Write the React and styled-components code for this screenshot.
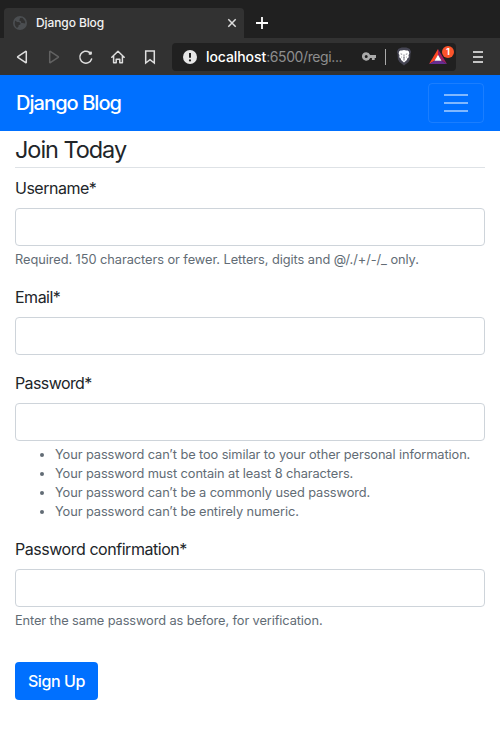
import React from "react";
import styled, { createGlobalStyle } from "styled-components";

const GlobalStyle = createGlobalStyle`
  *, *::before, *::after { box-sizing: border-box; }
  body {
    margin: 0;
    background: #fff;
    color: #212529;
    font-family: Inter, "Liberation Sans", sans-serif;
    font-size: 16px;
    line-height: 24px;
  }
`;

const Page = styled.div`
  min-height: 753px;
  background: #fff;
`;

const TabStrip = styled.div`
  display: flex;
  align-items: flex-end;
  height: 38px;
  padding-left: 4px;
  background: #202020;
`;

const Tab = styled.div`
  display: flex;
  align-items: center;
  width: 240px;
  height: 30px;
  padding: 0 7px 0 9px;
  border-radius: 4px 4px 0 0;
  background: #323232;
`;

const TabTitle = styled.span`
  flex: 1;
  margin-left: 9px;
  color: #f2f2f2;
  font-size: 12px;
  font-weight: 500;
  line-height: 16px;
  letter-spacing: -0.1px;
`;

const NewTab = styled.div`
  display: flex;
  align-items: center;
  height: 30px;
  padding-left: 12px;
`;

const Toolbar = styled.div`
  display: flex;
  align-items: center;
  height: 37px;
  padding: 0 14px 0 14px;
  background: #323232;
`;

const ToolIcons = styled.div`
  display: flex;
  gap: 16px;
`;

const Address = styled.div`
  display: flex;
  align-items: center;
  width: 284px;
  height: 28px;
  margin-left: 14px;
  padding-left: 11px;
  border-radius: 4px;
  background: #202020;
`;

const Url = styled.span`
  flex: none;
  width: 156px;
  margin-left: 9px;
  color: #8e8e8e;
  font-size: 14px;
  line-height: 20px;
  letter-spacing: -0.4px;
  white-space: nowrap;
`;

const Host = styled.span`
  color: #fff;
  font-weight: 500;
  letter-spacing: -0.08px;
`;

const Divider = styled.span`
  width: 1px;
  height: 16px;
  margin: 0 10px 0 9px;
  background: #aaa;
`;

const Rewards = styled.span`
  position: relative;
  display: flex;
  margin-left: 17px;
`;

const Count = styled.span`
  position: absolute;
  top: -3px;
  left: 13px;
  width: 12px;
  height: 12px;
  border-radius: 50%;
  background: #fb542b;
  color: #fff;
  font-size: 9px;
  font-weight: 700;
  line-height: 12px;
  text-align: center;
`;

const MenuButton = styled.span`
  display: flex;
  margin-left: 15px;
`;

const Navbar = styled.nav`
  display: flex;
  align-items: center;
  justify-content: space-between;
  height: 56px;
  padding: 0 16px;
  background: #0070ff;
`;

const Brand = styled.span`
  color: #fff;
  font-size: 20px;
  font-weight: 500;
  line-height: 30px;
  letter-spacing: -0.93px;
`;

const Toggler = styled.button`
  display: flex;
  align-items: center;
  justify-content: center;
  width: 56px;
  height: 40px;
  padding: 0;
  border: 1px solid rgba(255, 255, 255, 0.1);
  border-radius: 4px;
  background: transparent;
`;

const Form = styled.form`
  padding: 0 15px;
`;

const Legend = styled.h1`
  height: 37px;
  margin: 0 0 8px;
  border-bottom: 1px solid #dee2e6;
  font-size: 23.5px;
  font-weight: 400;
  line-height: 38px;
  letter-spacing: -1.05px;
`;

const Group = styled.div`
  margin-bottom: 16px;
`;

const Label = styled.label`
  display: block;
  margin-bottom: 8px;
  line-height: 24px;
  letter-spacing: ${(p) => p.$spacing || "-0.5px"};
`;

const Input = styled.input`
  display: block;
  width: 100%;
  height: 38px;
  padding: 6px 12px;
  border: 1px solid #ced4da;
  border-radius: 4px;
  background: #fff;
  font: inherit;
`;

const Help = styled.div`
  margin-top: 4px;
  color: #626c75;
  font-size: 12.8px;
  line-height: 19px;
  letter-spacing: ${(p) => p.$spacing || "-0.1px"};
  white-space: nowrap;
`;

const Rules = styled.ul`
  margin: 0;
  padding-left: 40px;
`;

const Submit = styled.button`
  display: block;
  width: 83px;
  height: 38px;
  margin-top: 32px;
  padding: 0;
  border: 0;
  border-radius: 4px;
  background: #0070ff;
  color: #fff;
  font-family: inherit;
  font-size: 16px;
  font-weight: 450;
  line-height: 24px;
  letter-spacing: -0.4px;
`;

const Globe = () => (
  <svg width="14" height="14" viewBox="0 0 14 14">
    <circle cx="7" cy="7" r="7" fill="#4b4e51" />
    <path d="M2.2 4.6 4.1 6l2-.1 1.5 1.7-.5 1.2-1.4.3-.2 1.4-1.4 1.5C2.3 10.9 1.1 8.3 2.2 4.6ZM7 2l2.3-.2 2.9 3.4-.1 2.4-2.5-.7-1.3.2-.3-1.8-1.7-.6Z" fill="#323232" />
  </svg>
);

const Stroke = ({ children, color = "#dedede", width = 1.5 }) => (
  <svg width="16" height="16" viewBox="0 0 16 16" fill="none" stroke={color} strokeWidth={width} strokeLinejoin="round" strokeLinecap="round">
    {children}
  </svg>
);

const Warning = () => (
  <svg width="14" height="14" viewBox="0 0 14 14">
    <circle cx="7" cy="7" r="7" fill="#e6e6e6" />
    <path d="M7 3v4.8" stroke="#202020" strokeWidth="2" />
    <circle cx="7" cy="10.4" r="1.1" fill="#202020" />
  </svg>
);

const Key = () => (
  <svg width="14" height="9" viewBox="0 0 14 9">
    <path fill="#aaa" fillRule="evenodd" d="M4.2.2a4.1 4.1 0 0 1 3.9 2.7H14v3h-1.3v2.2H9.9V5.9H8.1A4.2 4.2 0 1 1 4.2.2Zm0 2.7a1.5 1.5 0 1 0 0 3 1.5 1.5 0 0 0 0-3Z" />
  </svg>
);

const Lion = () => (
  <svg width="16" height="19" viewBox="0 0 16 19">
    <path d="m4.3 1 1.5-.6h4.4l1.5.6 2.1 1 1.4 3-.7 1.5-.4 5.8L12.5 15 8 18.4 3.5 15l-1.6-2.7-.4-5.8L.8 5l1.4-3Z" fill="#464654" />
    <path d="m3.1 4.4 1.3-1 1.5.2L8 3l2.1.6 1.5-.2 1.3 1 .4 2.2-.8 1.7.3 1.9-1.5 1.3-.4 1.6L8 15.4l-2.9-2.3-.4-1.6-1.5-1.3.3-1.9-.8-1.7Z" fill="#fff" />
    <path d="m4.5 6.5 2 .4-.7.6-1-.2Zm7 0-2 .4.7.6 1-.2ZM7.6 7.5h.8l-.2 2.8.8.7-1 .7-1-.7.8-.7ZM5.1 9.4l.9.7-.4.7Zm5.8 0-.9.7.4.7ZM6.8 12.8l1.2-.4 1.2.4-1.2.8Z" fill="#464654" />
  </svg>
);

const Triangle = () => (
  <svg width="18" height="16" viewBox="0 0 18 16">
    <path d="M9 0 0 15l5.8-3.4L9 6Z" fill="#ff4724" />
    <path d="m9 0 9 15-5.8-3.4L9 6Z" fill="#9e1f63" />
    <path d="M0 15h18l-5.8-3.4H5.8Z" fill="#662d91" />
    <path d="m9 5.8 3.5 6h-7Z" fill="#fff" />
  </svg>
);

const Field = ({ label, spacing, helpSpacing, type = "text", children }) => (
  <Group>
    <Label $spacing={spacing}>{label}</Label>
    <Input type={type} aria-label={label} />
    {children && <Help $spacing={helpSpacing}>{children}</Help>}
  </Group>
);

const passwordRules = [
  "Your password can’t be too similar to your other personal information.",
  "Your password must contain at least 8 characters.",
  "Your password can’t be a commonly used password.",
  "Your password can’t be entirely numeric.",
];

export default function App() {
  return (
    <Page>
      <GlobalStyle />
      <TabStrip>
        <Tab>
          <Globe />
          <TabTitle>Django Blog</TabTitle>
          <svg width="10" height="10" viewBox="0 0 10 10" stroke="#dedede" strokeWidth="1.5">
            <path d="m1.3 1.3 7.4 7.4m0-7.4L1.3 8.7" />
          </svg>
        </Tab>
        <NewTab>
          <svg width="12" height="12" viewBox="0 0 12 12" stroke="#fff" strokeWidth="1.8">
            <path d="M6 0v12M0 6h12" />
          </svg>
        </NewTab>
      </TabStrip>
      <Toolbar>
        <ToolIcons>
          <Stroke><path d="M12.3 2.6v10.8a.4.4 0 0 1-.6.2L3.8 8.4a.5.5 0 0 1 0-.8l7.9-5.2a.4.4 0 0 1 .6.2Z" /></Stroke>
          <Stroke color="#626262"><path d="M3.7 2.6v10.8a.4.4 0 0 0 .6.2l7.9-5.2a.5.5 0 0 0 0-.8L4.3 2.4a.4.4 0 0 0-.6.2Z" /></Stroke>
          <Stroke>
            <path d="M11.4 3.3A6 6 0 1 0 13.6 10" />
            <circle cx="12.2" cy="4.1" r="1.6" fill="#dedede" stroke="none" />
            <path d="M13.7 2.2v3.3h-3.3Z" fill="#dedede" stroke="none" />
          </Stroke>
          <Stroke><path d="m1.8 8.3 6.2-6 6.2 6M3.6 7.2v6.5h2.6v-3.4h3.6v3.4h2.6V7.2" /></Stroke>
          <Stroke><path d="M3.7 2h8.6v12L8 10.7 3.7 14Z" strokeLinejoin="miter" /></Stroke>
        </ToolIcons>
        <Address>
          <Warning />
          <Url><Host>localhost</Host>:6500/regi...</Url>
          <Key />
          <Divider />
          <Lion />
          <Rewards><Triangle /><Count>1</Count></Rewards>
        </Address>
        <MenuButton>
          <svg width="14" height="12" viewBox="0 0 14 12" stroke="#c4c4c4" strokeWidth="1.8">
            <path d="M2 1h10M2 6h10M2 11h10" />
          </svg>
        </MenuButton>
      </Toolbar>
      <Navbar>
        <Brand>Django Blog</Brand>
        <Toggler type="button" aria-label="Toggle navigation">
          <svg width="24" height="18" viewBox="0 0 24 18" stroke="#fff" strokeOpacity=".5" strokeWidth="2">
            <path d="M0 1h24M0 9h24M0 17h24" />
          </svg>
        </Toggler>
      </Navbar>
      <Form>
        <Legend>Join Today</Legend>
        <Field label="Username*" helpSpacing="-0.06px">Required. 150 characters or fewer. Letters, digits and @/./+/-/_ only.</Field>
        <Field label="Email*" />
        <Field label="Password*" type="password" spacing="-0.6px" helpSpacing="-0.09px">
          <Rules>{passwordRules.map((rule) => <li key={rule}>{rule}</li>)}</Rules>
        </Field>
        <Field label="Password confirmation*" type="password" spacing="-0.46px">
          Enter the same password as before, for verification.
        </Field>
        <Submit type="button">Sign Up</Submit>
      </Form>
    </Page>
  );
}
